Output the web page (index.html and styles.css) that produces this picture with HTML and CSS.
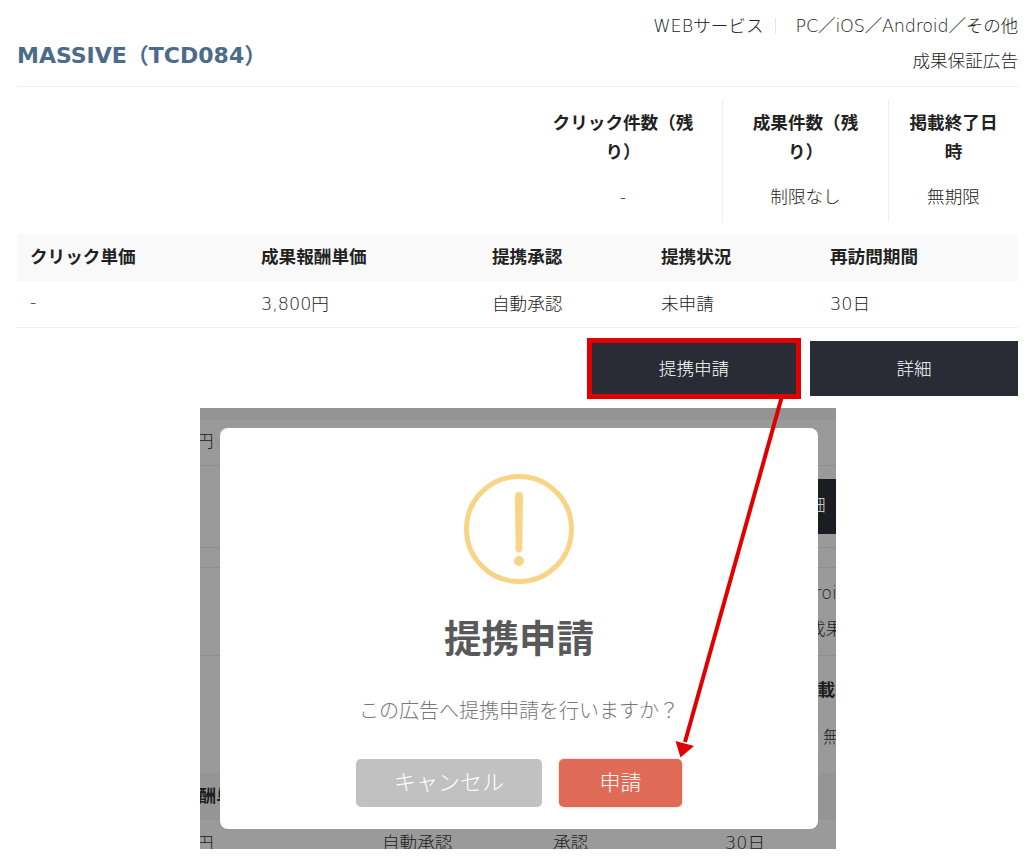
FILE: index.html
```html
<!DOCTYPE html>
<html lang="ja">
<head>
<meta charset="utf-8">
<title>MASSIVE</title>
<link rel="stylesheet" href="styles.css">
</head>
<body>
<main class="page">
  <header class="head">
    <h1 class="title">MASSIVE（TCD084）</h1>
    <div class="meta">
      <div class="meta-line"><span class="meta-cat">WEBサービス</span><span class="meta-dev">PC／iOS／Android／その他</span></div>
      <div class="meta-line">成果保証広告</div>
    </div>
  </header>

  <section class="stats">
    <div class="stat stat-a"><div class="stat-h">クリック件数（残り）</div><div class="stat-v">-</div></div>
    <div class="stat stat-b"><div class="stat-h">成果件数（残り）</div><div class="stat-v">制限なし</div></div>
    <div class="stat stat-c"><div class="stat-h">掲載終了日時</div><div class="stat-v">無期限</div></div>
  </section>

  <section class="grid">
    <div class="cell th">クリック単価</div>
    <div class="cell th">成果報酬単価</div>
    <div class="cell th">提携承認</div>
    <div class="cell th">提携状況</div>
    <div class="cell th">再訪問期間</div>
    <div class="cell td">-</div>
    <div class="cell td">3,800円</div>
    <div class="cell td">自動承認</div>
    <div class="cell td">未申請</div>
    <div class="cell td">30日</div>
  </section>

  <section class="actions">
    <button class="btn btn-apply">提携申請</button>
    <button class="btn">詳細</button>
  </section>

  <figure class="shot">
    <span class="bg bg-top"></span>
    <span class="bg bg-rule r1"></span>
    <span class="bg bg-rule r2"></span>
    <span class="bg bg-rule r3"></span>
    <span class="bg bg-rule r4"></span>
    <span class="bg bg-band"></span>
    <span class="bg bg-btn">詳細</span>
    <span class="bg t1">円</span>
    <span class="bg t2">Android</span>
    <span class="bg t3">成果</span>
    <span class="bg t4">掲載終</span>
    <span class="bg t5">無期限</span>
    <span class="bg t6">報酬単</span>
    <span class="bg t7">円</span>
    <span class="bg t8">自動承認</span>
    <span class="bg t9">承認</span>
    <span class="bg t10">30日</span>

    <div class="modal">
      <svg class="warn" width="110" height="110" viewBox="0 0 110 110" aria-hidden="true">
        <circle cx="55" cy="55" r="52.5" fill="none" stroke="#f8d486" stroke-width="5"/>
        <path d="M51 22a4 4 0 0 1 8 0l-.6 53a3.4 3.4 0 0 1-6.8 0z" fill="#f8d486"/>
        <circle cx="55" cy="87" r="5" fill="#f8d486"/>
      </svg>
      <h2 class="m-title">提携申請</h2>
      <p class="m-text">この広告へ提携申請を行いますか？</p>
      <div class="m-btns">
        <button class="m-btn m-cancel">キャンセル</button>
        <button class="m-btn m-ok">申請</button>
      </div>
    </div>
  </figure>
</main>

<svg class="arrow" width="1035" height="867" viewBox="0 0 1035 867" aria-hidden="true">
  <line x1="781.5" y1="398" x2="685" y2="742" stroke="#e00000" stroke-width="4"/>
  <polygon points="675.5,741 694,746 680.5,757.5" fill="#e00000"/>
</svg>
</body>
</html>
```
FILE: styles.css
```css
* { box-sizing: border-box; }
html, body { margin: 0; padding: 0; background: #fff; }
body {
  position: relative;
  height: 867px;
  overflow: hidden;
  font-family: "DejaVu Sans", "Noto Sans CJK JP", sans-serif;
  font-size: 17.6px;
  font-weight: 300;
  color: #222;
}
.page { padding: 0 17px; }

.head {
  display: flex;
  justify-content: space-between;
  align-items: flex-start;
  height: 87px;
  border-bottom: 1px solid #eee;
}
.title {
  margin: 40px 0 0;
  font-size: 22px;
  font-weight: 700;
  color: #4b6b8b;
  line-height: 32px;
}
.meta { margin-top: 9px; text-align: right; line-height: 35px; }
.meta-cat {
  display: inline-block;
  line-height: 16px;
  padding-right: 11px;
  margin-right: 20px;
  border-right: 1px solid #e6e6e6;
}
.meta-dev { letter-spacing: -.22px; }

.stats {
  display: flex;
  justify-content: flex-end;
  margin-top: 13px;
  margin-bottom: 12px;
  height: 122px;
}
.stat { padding-top: 9px; text-align: center; }
.stat + .stat { border-left: 1px solid #eee; }
.stat-a { width: 198px; padding-left: 18px; padding-right: 18px; }
.stat-b { width: 166px; padding-left: 28px; padding-right: 28px; }
.stat-c { width: 130px; padding-left: 18px; padding-right: 18px; }
.stat-h { font-weight: 700; line-height: 29px; }
.stat-v { margin-top: 18px; line-height: 24px; }

.grid {
  display: grid;
  grid-template-columns: 231px 231px 169px 169px 201px;
  border-bottom: 1px solid #eee;
}
.cell { padding: 0 13px 4px; display: flex; align-items: center; }
.th { height: 47px; background: #f9f9f9; font-weight: 700; }
.td { height: 46px; }

.actions {
  display: flex;
  justify-content: flex-end;
  gap: 12px;
  margin-top: 13px;
}
.btn {
  width: 208px;
  height: 55px;
  border: 0;
  padding: 0 0 3px;
  background: #292c34;
  color: #fff;
  font: inherit;
}
.btn-apply {
  outline: 5px solid #e00000;
  outline-offset: -2px;
}

.shot {
  position: relative;
  width: 636px;
  height: 441px;
  margin: 12px 0 0 183px;
  background: #9a9a9a;
  overflow: hidden;
  color: #1c1d22;
}
.bg { position: absolute; white-space: nowrap; line-height: 24px; }
.bg-top { left: 0; right: 0; top: 0; height: 12px; background: #949494; }
.bg-rule { left: 0; right: 0; height: 1px; background: #8f8f8f; }
.r1 { top: 57px; }
.r2 { top: 139px; }
.r3 { top: 159px; }
.r4 { top: 247px; }
.bg-band { left: 0; right: 0; top: 365px; height: 47px; background: #959595; }
.bg-btn {
  left: 504px;
  top: 71px;
  width: 208px;
  height: 55px;
  line-height: 53px;
  text-align: center;
  background: #1c1d22;
  color: #ddd;
}
.t1 { left: -4px; top: 21px; }
.t2 { left: 580px; top: 173px; }
.t3 { left: 608px; top: 209px; }
.t4 { left: 600px; top: 270px; font-weight: 700; }
.t5 { left: 623px; top: 317px; }
.t6 { left: -19px; top: 376px; font-weight: 700; }
.t7 { left: -4px; top: 423px; }
.t8 { left: 182px; top: 423px; }
.t9 { left: 353px; top: 423px; }
.t10 { left: 525px; top: 423px; }

.modal {
  position: absolute;
  left: 20px;
  top: 20px;
  width: 598px;
  height: 401px;
  background: #fff;
  border-radius: 8px;
  display: flex;
  flex-direction: column;
  align-items: center;
  padding-top: 46px;
}
.warn { display: block; flex: none; }
.m-title {
  margin: 28px 0 0;
  font-size: 37.5px;
  line-height: 54px;
  font-weight: 700;
  color: #595959;
}
.m-text {
  margin: 30px 0 0;
  font-size: 20px;
  line-height: 30px;
  color: #777;
}
.m-btns { display: flex; gap: 17px; margin-top: 33px; }
.m-btn {
  height: 48px;
  border: 0;
  border-radius: 5px;
  color: #fff;
  font: inherit;
  font-size: 21px;
  line-height: 48px;
  padding: 0;
}
.m-cancel { width: 186px; background: #c1c1c1; font-size: 22px; }
.m-ok { width: 123px; background: #df6b57; box-shadow: 0 0 2px rgba(223, 107, 87, .6); }

.arrow { position: absolute; left: 0; top: 0; pointer-events: none; }
```
